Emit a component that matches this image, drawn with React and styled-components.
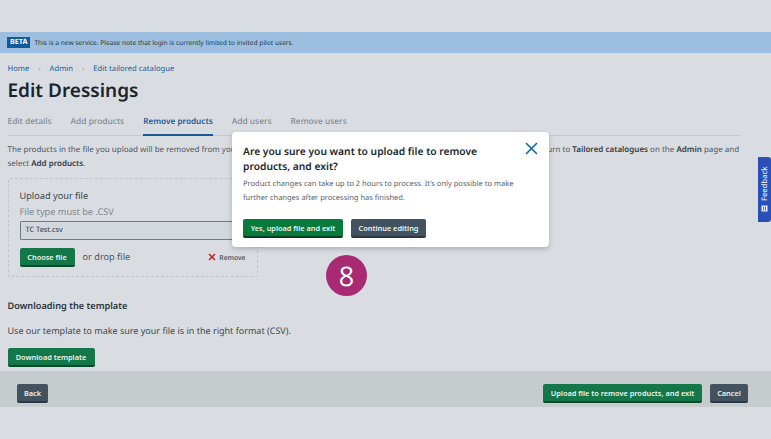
import React from "react";
import styled, { createGlobalStyle } from "styled-components";

const GlobalStyle = createGlobalStyle`
  html, body {
    margin: 0;
    padding: 0;
    background: #d9dde2;
    font-family: "Noto Sans", "Open Sans", sans-serif;
    color: #2b3238;
    text-rendering: geometricPrecision;
  }
  * { box-sizing: border-box; }
`;

const Page = styled.div`
  position: relative;
  width: 771px;
  height: 439px;
  overflow: hidden;
  padding-top: 32px;
  background: #d9dde2;
`;
const BetaBar = styled.div`
  height: 21px;
  background: #9dbfdf;
  display: flex;
  align-items: center;
  gap: 4px;
  padding-left: 7px;
`;
const BetaTag = styled.span`
  background: #0f5a9e;
  color: #fff;
  font-size: 7.2px;
  font-weight: 700;
  line-height: 11px;
  padding: 0 3px;
`;
const BetaText = styled.span`
  font-size: 6.6px;
  color: #27333d;
`;
const Content = styled.div`
  padding: 0 0 0 7.5px;
`;
const Crumbs = styled.nav`
  display: flex;
  align-items: center;
  height: 10px;
  margin-top: 11px;
  font-size: 7.7px;
  color: #1d5c94;
`;
const CrumbSep = styled.span`
  color: #8b98a3;
  margin: 0 9px;
  font-size: 7px;
`;
const Title = styled.h1`
  margin: 2px 0 0;
  font-size: 19px;
  line-height: 28px;
  font-weight: 600;
  color: #1c242b;
`;
const Tabs = styled.div`
  display: flex;
  gap: 19px;
  height: 30px;
  margin-top: 2px;
  margin-right: 31px;
  border-bottom: 1px solid #c3c8cc;
`;
const Tab = styled.div`
  font-size: ${({ $active }) => ($active ? "8.2px" : "8.4px")};
  line-height: 12px;
  padding-top: 10px;
  height: 30px;
  font-weight: ${({ $active }) => ($active ? 600 : 500)};
  color: ${({ $active }) => ($active ? "#1d5a94" : "#7f8a93")};
  border-bottom: ${({ $active }) => ($active ? "2px solid #1d5a94" : "none")};
`;
const Intro = styled.p`
  margin: 7px 20px 0 0;
  font-size: 8px;
  line-height: 14px;
  color: #4c565e;
  b {
    font-weight: 600;
    color: #333c44;
  }
`;
const UploadBox = styled.section`
  width: 250px;
  height: 99px;
  margin-top: 7px;
  padding: 10px 11px 0;
  border: 1px dashed #c0c5c9;
  border-radius: 2px;
`;
const UploadLabel = styled.div`
  font-size: 9.2px;
  line-height: 13px;
  color: #39424a;
`;
const UploadHint = styled.div`
  font-size: 9.2px;
  line-height: 13px;
  margin-top: 3px;
  color: #7d878f;
`;
const FileField = styled.div`
  height: 19px;
  width: 226px;
  margin-top: 3px;
  padding-left: 5px;
  border: 1px solid #6f7a83;
  border-radius: 1px;
  background: #d3d8dc;
  font-size: 7.4px;
  line-height: 17px;
  color: #2d353c;
`;
const FileRow = styled.div`
  display: flex;
  align-items: center;
  width: 226px;
  margin-top: 8px;
`;
const DropText = styled.span`
  margin: 0 0 3px 8px;
  font-size: 9.2px;
  color: #4a535b;
`;
const RemoveLink = styled.span`
  margin: 0 0 1px auto;
  display: flex;
  align-items: center;
  gap: 3px;
  font-size: 6.8px;
  font-weight: 500;
  color: #3a4249;
`;
const Button = styled.button`
  display: inline-flex;
  align-items: center;
  justify-content: center;
  width: ${({ $w }) => $w}px;
  height: 19px;
  padding: 0;
  border: 0;
  border-bottom: 2px solid ${({ $dark, $strong }) => ($dark ? "#2a3845" : $strong ? "#02401f" : "#0a4a2a")};
  border-radius: 2px;
  background: ${({ $dark, $strong }) => ($dark ? "#43525f" : $strong ? "#087a3c" : "#13774a")};
  color: #eef3f1;
  font-family: inherit;
  font-size: 7.35px;
  font-weight: 600;
`;
const SectionHeading = styled.h2`
  margin: 22px 0 0;
  font-size: 9.2px;
  line-height: 13px;
  font-weight: 600;
  color: #2b333a;
`;
const SectionText = styled.p`
  margin: 12px 0 0;
  font-size: 9px;
  line-height: 13px;
  color: #3d464e;
`;
const DownloadRow = styled.div`
  margin-top: 11px;
  display: flex;
`;
const Footer = styled.footer`
  display: flex;
  align-items: flex-end;
  gap: 8px;
  height: 36px;
  margin-top: 4px;
  padding: 0 23px 4px 17px;
  background: #c6cbce;
`;
const FooterSpacer = styled.div`
  flex: 1;
`;
const Modal = styled.div`
  position: absolute;
  left: 232px;
  top: 132px;
  width: 317px;
  height: 115px;
  padding: 13px 11px 0;
  background: #fff;
  border-radius: 4px;
  box-shadow: 0 2px 5px rgba(60, 70, 80, 0.3);
`;
const ModalTitle = styled.h3`
  margin: 0;
  width: 262px;
  font-size: 10.25px;
  line-height: 15px;
  font-weight: 600;
  color: #20282f;
`;
const ModalText = styled.p`
  margin: 3px 0 0;
  width: 290px;
  font-size: 7.5px;
  line-height: 13.5px;
  color: #5a636b;
`;
const ModalActions = styled.div`
  display: flex;
  gap: 8px;
  margin-top: 14px;
`;
const CloseButton = styled.svg`
  position: absolute;
  left: 293px;
  top: 10px;
  width: 13px;
  height: 13px;
`;
const StepBadge = styled.div`
  position: absolute;
  left: 326px;
  top: 255px;
  width: 41px;
  height: 41px;
  border-radius: 50%;
  background: #a82a72;
  color: #fff;
  display: flex;
  align-items: center;
  justify-content: center;
  font-family: "Open Sans", "Noto Sans", sans-serif;
  font-size: 27px;
  line-height: 1;
`;
const FeedbackTab = styled.div`
  position: absolute;
  left: 758px;
  top: 157px;
  width: 13px;
  height: 65px;
  background: #2a50b8;
  border-radius: 3px 0 0 3px;
  color: #e9eefb;
  display: flex;
  align-items: center;
  justify-content: center;
  gap: 4px;
  padding-top: 1px;
  writing-mode: vertical-rl;
  transform: rotate(180deg);
  font-size: 7.6px;
  font-weight: 500;
`;

const tabs = ["Edit details", "Add products", "Remove products", "Add users", "Remove users"];

export default function App() {
  return (
    <Page>
      <GlobalStyle />
      <BetaBar>
        <BetaTag>BETA</BetaTag>
        <BetaText>This is a new service. Please note that login is currently limited to invited pilot users.</BetaText>
      </BetaBar>
      <Content>
        <Crumbs>
          Home<CrumbSep>›</CrumbSep>Admin<CrumbSep>›</CrumbSep>Edit tailored catalogue
        </Crumbs>
        <Title>Edit Dressings</Title>
        <Tabs>
          {tabs.map((t) => (
            <Tab key={t} $active={t === "Remove products"}>{t}</Tab>
          ))}
        </Tabs>
        <Intro>
          The products in the file you upload will be removed from your tailored catalogue. To remove products from a different catalogue at any time, return to <b>Tailored catalogues</b> on the <b>Admin</b> page and<br />
          select <b>Add products</b>.
        </Intro>
        <UploadBox>
          <UploadLabel>Upload your file</UploadLabel>
          <UploadHint>File type must be .CSV</UploadHint>
          <FileField>TC Test.csv</FileField>
          <FileRow>
            <Button $w={55}>Choose file</Button>
            <DropText>or drop file</DropText>
            <RemoveLink>
              <svg width="8" height="8" viewBox="0 0 8 8">
                <path d="M1 1l6 6M7 1L1 7" stroke="#c0272d" strokeWidth="1.6" />
              </svg>
              Remove
            </RemoveLink>
          </FileRow>
        </UploadBox>
        <SectionHeading>Downloading the template</SectionHeading>
        <SectionText>Use our template to make sure your file is in the right format (CSV).</SectionText>
        <DownloadRow>
          <Button $w={87}>Download template</Button>
        </DownloadRow>
      </Content>
      <Footer>
        <Button $dark $w={31}>Back</Button>
        <FooterSpacer />
        <Button $w={159}>Upload file to remove products, and exit</Button>
        <Button $dark $w={38}>Cancel</Button>
      </Footer>
      <Modal>
        <ModalTitle>Are you sure you want to upload file to remove products, and exit?</ModalTitle>
        <CloseButton viewBox="0 0 13 13">
          <path d="M1 1l11 11M12 1L1 12" stroke="#1565a8" strokeWidth="1.6" fill="none" />
        </CloseButton>
        <ModalText>
          Product changes can take up to 2 hours to process. It’s only possible to make further changes after processing has finished.
        </ModalText>
        <ModalActions>
          <Button $strong $w={100}>Yes, upload file and exit</Button>
          <Button $dark $w={75}>Continue editing</Button>
        </ModalActions>
      </Modal>
      <StepBadge>8</StepBadge>
      <FeedbackTab>
        <svg width="7" height="7" viewBox="0 0 7 7" style={{ transform: "rotate(90deg)" }}>
          <rect x="0.5" y="0.5" width="6" height="6" fill="#e9eefb" />
          <path d="M1.5 2.5h4M1.5 4.5h4" stroke="#2a50b8" strokeWidth="0.8" />
        </svg>
        Feedback
      </FeedbackTab>
    </Page>
  );
}
